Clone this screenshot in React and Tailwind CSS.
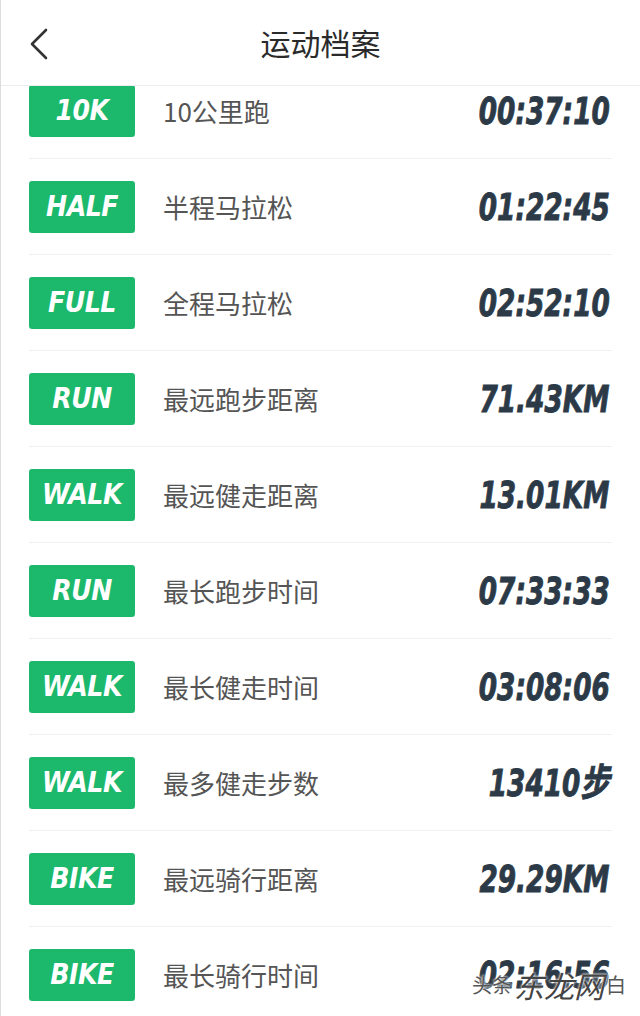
import { useMemo } from 'react'

const ROWS = [
  ['10K', '10公里跑', '00:37:10'],
  ['HALF', '半程马拉松', '01:22:45'],
  ['FULL', '全程马拉松', '02:52:10'],
  ['RUN', '最远跑步距离', '71.43KM'],
  ['WALK', '最远健走距离', '13.01KM'],
  ['RUN', '最长跑步时间', '07:33:33'],
  ['WALK', '最长健走时间', '03:08:06'],
  ['WALK', '最多健走步数', '13410步'],
  ['BIKE', '最远骑行距离', '29.29KM'],
  ['BIKE', '最长骑行时间', '02:16:56'],
]

const cjk = { fontFamily: '"Noto Sans CJK SC", "Noto Sans", sans-serif' }
const num = { fontFamily: '"Liberation Sans Narrow", "DejaVu Sans Condensed", "Noto Sans CJK SC", sans-serif' }

function Row({ tag, label, value }) {
  return (
    <div className="mx-[28px] h-[96px] flex items-center border-b border-[#f0f0f0]">
      <div
        style={num}
        className="w-[106px] h-[52px] shrink-0 rounded-[3px] bg-[#1cb96d] flex items-center justify-center text-white text-[28px] font-bold italic tracking-[-0.5px]"
      >
        {tag}
      </div>
      <div style={cjk} className="ml-[28px] text-[26px] text-[#555]">{label}</div>
      <div
        style={num}
        className="ml-auto pr-[3px] pt-[2px] inline-block origin-right scale-x-[0.77] text-[38px] font-bold italic text-[#2c3a48] whitespace-nowrap [-webkit-text-stroke:0.9px_#2c3a48]"
      >
        {value}
      </div>
    </div>
  )
}

export default function App() {
  const rows = useMemo(() => ROWS, [])

  return (
    <div className="w-[640px] h-[1016px] overflow-hidden bg-white border-l border-[#dcdcdc] relative">
      {/* header stays over the scrolled list */}
      <header className="relative z-10 h-[86px] bg-white border-b border-[#ececec] flex items-center justify-center">
        <svg className="absolute left-[27px] top-[28px]" width="22" height="32" viewBox="0 0 22 32">
          <polyline points="18,2 4,16 18,30" fill="none" stroke="#333" strokeWidth="2.6" strokeLinecap="round" strokeLinejoin="round" />
        </svg>
        <h1 style={cjk} className="text-[30px] text-[#2a2a2a]">运动档案</h1>
      </header>

      <div className="-mt-[23px]">
        {rows.map(([t, l, v], i) => (
          <Row key={i} tag={t} label={l} value={v} />
        ))}
      </div>

      {/* watermark */}
      <div
        style={cjk}
        className="absolute right-[14px] bottom-[16px] flex items-end gap-[2px] text-[#555] [text-shadow:0_0_3px_#fff,0_0_2px_#fff]"
      >
        <span className="text-[20px]">头条</span>
        <span className="text-[30px] italic text-[#444] leading-none">东龙网</span>
        <span className="text-[20px]">白</span>
      </div>
    </div>
  )
}
